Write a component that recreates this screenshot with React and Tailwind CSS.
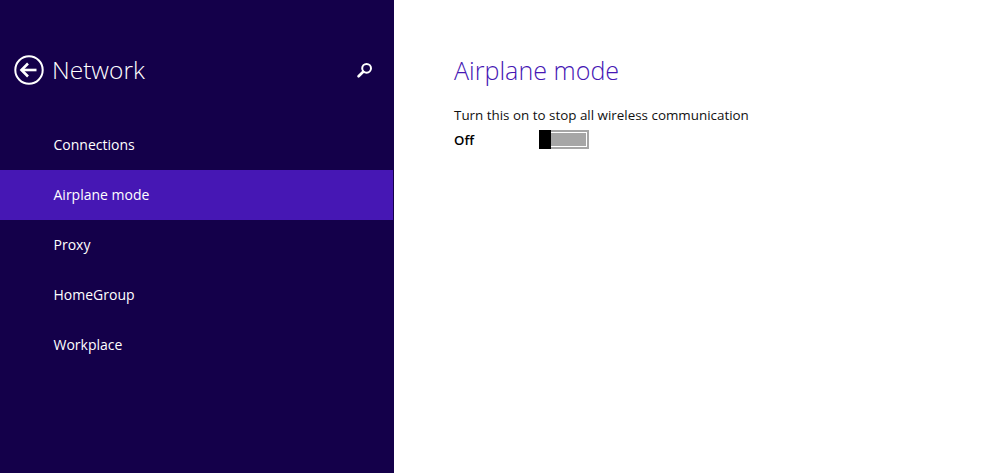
const FONT = "font-['Open_Sans','Noto_Sans',sans-serif]";

const items = [
  { label: 'Connections', active: false },
  { label: 'Airplane mode', active: true },
  { label: 'Proxy', active: false },
  { label: 'HomeGroup', active: false },
  { label: 'Workplace', active: false },
];

const BackIcon = () => (
  <svg width="30" height="30" viewBox="0 0 30 30" fill="none" stroke="#fff">
    <circle cx="15" cy="15" r="13.7" strokeWidth="2" />
    <path d="M7.5 15H22.5" strokeWidth="2.6" />
    <path d="M14 8.5L7.5 15L14 21.5" strokeWidth="2.6" />
  </svg>
);

const SearchIcon = () => (
  <svg width="16" height="16" viewBox="0 0 16 16" fill="none" stroke="#fff" className="ml-auto mt-[7px]">
    <circle cx="9.6" cy="6.3" r="4.4" strokeWidth="2" />
    <path d="M6.2 9.8L1.6 14.3" strokeWidth="2.6" strokeLinecap="round" />
  </svg>
);

export default function App() {
  return (
    <div className={`flex h-[473px] w-[1008px] overflow-hidden bg-white ${FONT}`}>
      <aside className="w-[394px] shrink-0 bg-[#14004a] text-white">
        <div className="flex h-[120px] items-start pl-[14px] pr-[21px] pt-[55px]">
          <BackIcon />
          <h1 className="ml-[8px] mt-[-3px] text-[24.5px] leading-[36px] font-light">Network</h1>
          <SearchIcon />
        </div>
        <nav>
          {items.map((item) => (
            <div
              key={item.label}
              className={`flex h-[50px] items-center pb-[2px] pl-[53.5px] text-[14px] ${
                item.active ? 'mr-px bg-[#4617b4]' : ''
              }`}
            >
              {item.label}
            </div>
          ))}
        </nav>
      </aside>
      <main className="flex-1 pl-[60px] pt-[52px]">
        <h2 className="text-[25.1px] leading-[36px] font-light text-[#4617b4]">Airplane mode</h2>
        <p className="mt-[17px] text-[13.4px] leading-[20px] text-[#111]">
          Turn this on to stop all wireless communication
        </p>
        <div className="mt-[5px] flex items-start">
          <span className="w-[85px] text-[13.2px] leading-[20px] font-semibold text-black">Off</span>
          <div className="flex h-[19px] w-[50px] border-2 border-[#a6a6a6] bg-white">
            <div className="-my-[2px] -ml-[2px] w-[12px] shrink-0 bg-black" />
            <div className="my-px mr-px flex-1 bg-[#a6a6a6]" />
          </div>
        </div>
      </main>
    </div>
  );
}
